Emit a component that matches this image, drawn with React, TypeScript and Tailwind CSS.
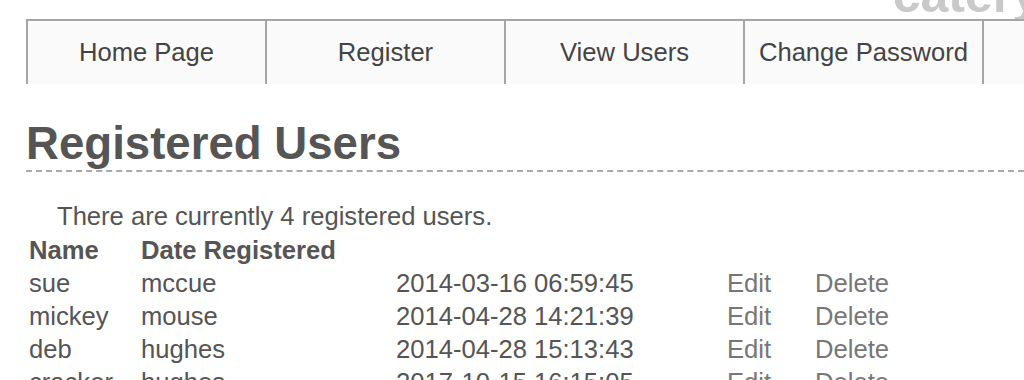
import React from "react";

const navItems = ["Home Page", "Register", "View Users", "Change Password", "Log Out"];

const users = [
  { first: "sue", last: "mccue", date: "2014-03-16 06:59:45" },
  { first: "mickey", last: "mouse", date: "2014-04-28 14:21:39" },
  { first: "deb", last: "hughes", date: "2014-04-28 15:13:43" },
  { first: "cracker", last: "hughes", date: "2017-10-15 16:15:05" },
];

export default function App() {
  return (
    <div className="h-[380px] w-full overflow-hidden bg-white font-['Liberation_Sans',Arial,sans-serif] leading-[normal] text-[#555]">
      {/* Header logo, mostly scrolled off the top */}
      <header className="h-[19px] overflow-hidden flex justify-end items-end">
        <span className="text-[50px] font-bold leading-none text-[#c9c9c9] -mr-[16px] -mb-px">
          catery
        </span>
      </header>

      <div className="pl-[26px]">
        {/* Nav bar */}
        <nav className="flex border-t-2 border-[#a5a5a5] bg-[#fafafa] whitespace-nowrap">
          {navItems.map((item) => (
            <a
              key={item}
              href="#"
              className="shrink-0 w-[239px] h-[63px] border-l-2 border-[#a5a5a5] flex items-center justify-center text-[25.6px] text-[#444]"
            >
              {item}
            </a>
          ))}
        </nav>

        {/* Page heading */}
        <h1 className="mt-[34px] text-[45.6px] font-bold text-[#555] border-b-2 border-dashed border-[#aaa]">
          Registered Users
        </h1>

        <p className="mt-[30px] pl-[31px] text-[25.6px]">
          There are currently 4 registered users.
        </p>

        <table className="mt-[2px] border-separate border-spacing-[2px] text-[25.6px]">
          <thead>
            <tr>
              <th className="w-[110px] p-px text-left font-bold">Name</th>
              <th className="w-[253px] p-px text-left font-bold">Date Registered</th>
            </tr>
          </thead>
          <tbody>
            {users.map((u) => (
              <tr key={u.first}>
                <td className="w-[110px] p-px">{u.first}</td>
                <td className="w-[253px] p-px">{u.last}</td>
                <td className="w-[329px] p-px">{u.date}</td>
                <td className="w-[86px] p-px">
                  <a href="#" className="text-[#777]">Edit</a>
                </td>
                <td className="p-px">
                  <a href="#" className="text-[#777]">Delete</a>
                </td>
              </tr>
            ))}
          </tbody>
        </table>
      </div>
    </div>
  );
}
